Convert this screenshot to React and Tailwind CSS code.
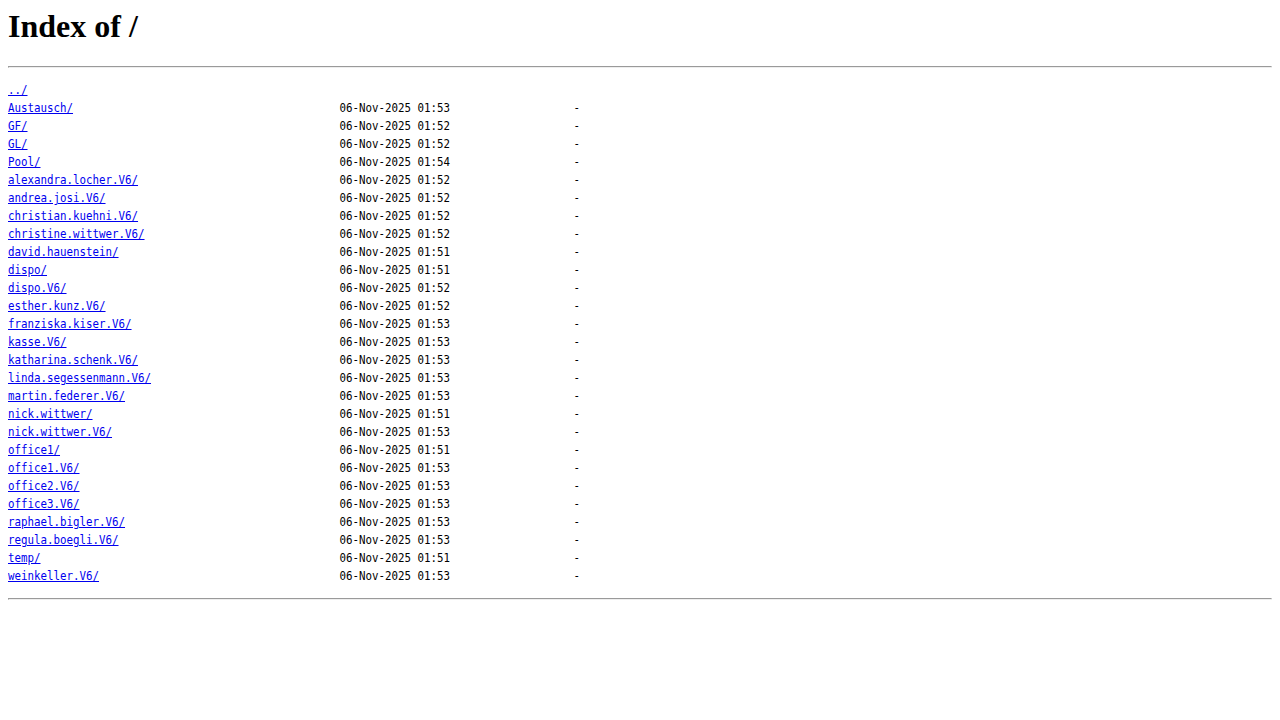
import React from 'react';

const entries = [
  ['Austausch/', '01:53'],
  ['GF/', '01:52'],
  ['GL/', '01:52'],
  ['Pool/', '01:54'],
  ['alexandra.locher.V6/', '01:52'],
  ['andrea.josi.V6/', '01:52'],
  ['christian.kuehni.V6/', '01:52'],
  ['christine.wittwer.V6/', '01:52'],
  ['david.hauenstein/', '01:51'],
  ['dispo/', '01:51'],
  ['dispo.V6/', '01:52'],
  ['esther.kunz.V6/', '01:52'],
  ['franziska.kiser.V6/', '01:53'],
  ['kasse.V6/', '01:53'],
  ['katharina.schenk.V6/', '01:53'],
  ['linda.segessenmann.V6/', '01:53'],
  ['martin.federer.V6/', '01:53'],
  ['nick.wittwer/', '01:51'],
  ['nick.wittwer.V6/', '01:53'],
  ['office1/', '01:51'],
  ['office1.V6/', '01:53'],
  ['office2.V6/', '01:53'],
  ['office3.V6/', '01:53'],
  ['raphael.bigler.V6/', '01:53'],
  ['regula.boegli.V6/', '01:53'],
  ['temp/', '01:51'],
  ['weinkeller.V6/', '01:53'],
];

function Row({ name, time }) {
  const pad = ' '.repeat(Math.max(1, 51 - name.length));
  return (
    <>
      <a href="#" className="text-[#0000ee] underline">{name}</a>
      {pad}
      {`06-Nov-2025 ${time}`}
      {'-'.padStart(20, ' ')}
      {'\n'}
    </>
  );
}

export default function App() {
  return (
    <div className="min-h-[720px] bg-white px-2 pt-2 text-black">
      <h1 className="mb-[21.44px] text-[32px] leading-[37px] font-bold font-['Liberation_Serif',serif]">
        Index of /
      </h1>
      <hr className="h-[2px] border-t border-b border-l border-r border-t-[#9a9a9a] border-l-[#9a9a9a] border-b-[#eeeeee] border-r-[#eeeeee]" />
      <pre className="mt-[13px] mb-[13px] origin-top-left scale-x-[0.8306] text-[13px] leading-[18px] font-['DejaVu_Sans_Mono',monospace] whitespace-pre">
        <a href="#" className="text-[#0000ee] underline">../</a>
        {'\n'}
        {entries.map(([name, time]) => (
          <Row key={name} name={name} time={time} />
        ))}
      </pre>
      <hr className="h-[2px] border-t border-b border-l border-r border-t-[#9a9a9a] border-l-[#9a9a9a] border-b-[#eeeeee] border-r-[#eeeeee]" />
    </div>
  );
}
